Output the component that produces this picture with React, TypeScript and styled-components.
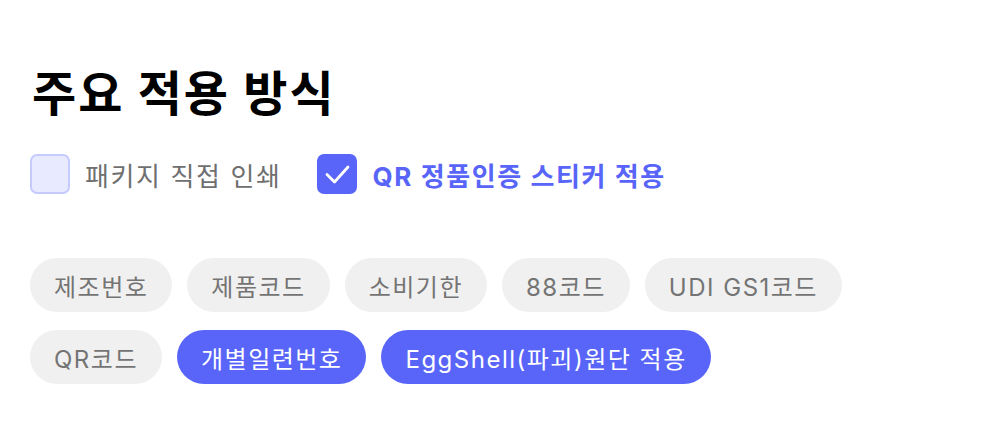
import React, { useState } from 'react'
import styled, { createGlobalStyle } from 'styled-components'

const BLUE = '#5865f8'

const options = [
    { id: 'print', label: '패키지 직접 인쇄' },
    { id: 'qr', label: 'QR 정품인증 스티커 적용' },
]

const tags = [
    { label: '제조번호', active: false },
    { label: '제품코드', active: false },
    { label: '소비기한', active: false },
    { label: '88코드', active: false },
    { label: 'UDI GS1코드', active: false },
    { label: 'QR코드', active: false },
    { label: '개별일련번호', active: true },
    { label: 'EggShell(파괴)원단 적용', active: true },
]

const App: React.FC = () => {
    const [checked, setChecked] = useState<string>('qr')

    return (
        <>
            <GlobalStyle />
            <Page>
                <Title>주요 적용 방식</Title>
                <OptionRow>
                    {options.map((option) => {
                        const on = checked === option.id
                        return (
                            <Option key={option.id} onClick={() => setChecked(option.id)}>
                                <Box $on={on}>
                                    {on ? (
                                        <svg width="40" height="40" viewBox="0 0 40 40" fill="none">
                                            <path d="M10 20.5l7.5 7.5L31 13" stroke="#fff" strokeWidth="2.8" strokeLinecap="round" strokeLinejoin="round" />
                                        </svg>
                                    ) : null}
                                </Box>
                                <OptionLabel $on={on}>{option.label}</OptionLabel>
                            </Option>
                        )
                    })}
                </OptionRow>
                <TagList>
                    {tags.map((tag, index) => (
                        <Tag key={index} $active={tag.active}>{tag.label}</Tag>
                    ))}
                </TagList>
            </Page>
        </>
    )
}

const GlobalStyle = createGlobalStyle`
    body {
        margin: 0;
        background: #fff;
        font-family: Inter, "Noto Sans CJK KR", sans-serif;
    }
`
const Page = styled.div`
    width: 984px;
    height: 444px;
    box-sizing: border-box;
    padding: 62px 30px 0 30px;
`
const Title = styled.h1`
    margin: 0 0 0 2px;
    font-size: 48px;
    line-height: 64px;
    font-weight: 700;
    color: #000;
    letter-spacing: 2px;
`
const OptionRow = styled.div`
    display: flex;
    align-items: center;
    gap: 36px;
    margin-top: 28px;
`
const Option = styled.label`
    display: flex;
    align-items: center;
    gap: 15px;
    cursor: pointer;
`
const Box = styled.span<{ $on: boolean }>`
    width: 40px;
    height: 40px;
    box-sizing: border-box;
    border-radius: 7px;
    display: flex;
    align-items: center;
    justify-content: center;
    background: ${(p) => (p.$on ? BLUE : '#e8eaff')};
    border: ${(p) => (p.$on ? 'none' : '2px solid #c6cbff')};
`
const OptionLabel = styled.span<{ $on: boolean }>`
    font-size: 26px;
    font-weight: ${(p) => (p.$on ? 700 : 400)};
    color: ${(p) => (p.$on ? BLUE : '#6f6f6f')};
    letter-spacing: 1.6px;
`
const TagList = styled.div`
    display: flex;
    flex-wrap: wrap;
    gap: 18px 15px;
    margin-top: 64px;
    width: 860px;
`
const Tag = styled.span<{ $active: boolean }>`
    height: 54px;
    padding: 0 24px;
    border-radius: 27px;
    display: inline-flex;
    align-items: center;
    font-size: 24px;
    letter-spacing: 1.5px;
    background: ${(p) => (p.$active ? BLUE : '#f0f0f0')};
    color: ${(p) => (p.$active ? '#fff' : '#747474')};
`

export default App
